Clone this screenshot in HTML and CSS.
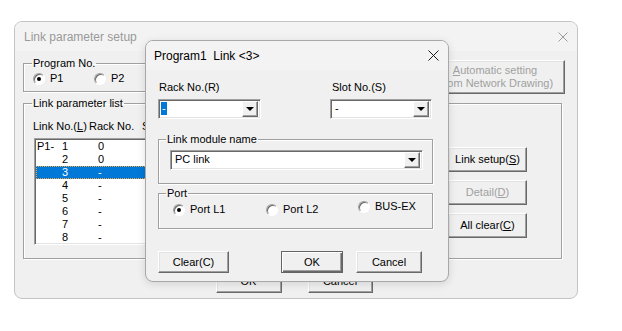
FILE: index.html
```html
<!DOCTYPE html>
<html lang="en">
  <head>
    <meta charset="UTF-8" />
    <meta name="viewport" content="width=device-width, initial-scale=1.0" />
    <title>Link parameter setup</title>
    <link rel="stylesheet" href="styles.css">
  </head>
  <body>
    <div class="desk">
      <!-- parent dialog (inactive) -->
      <div class="win win-back">
        <div class="titlebar inactive">
          <span class="title">Link parameter setup</span>
          <svg class="close" width="10" height="10" viewBox="0 0 10 10"><path d="M0.5 0.5L9.5 9.5M9.5 0.5L0.5 9.5" stroke="#9a9a9a" stroke-width="1"/></svg>
        </div>
        <div class="back-body">
          <div class="top-row">
            <fieldset class="group prog-group">
              <legend>Program No.</legend>
              <div class="radio-row">
                <label class="radio p1"><span class="dot on"></span>P1</label>
                <label class="radio"><span class="dot"></span>P2</label>
              </div>
            </fieldset>
            <button class="btn auto-btn" disabled><u>A</u>utomatic setting<br>(from Network Drawing)</button>
          </div>

          <fieldset class="group list-group">
            <legend>Link parameter list</legend>
            <div class="list-wrap">
              <div class="list-col">
                <div class="list-head">
                  <span class="h-link">Link No.(<u>L</u>)</span>
                  <span class="h-rack">Rack No.</span>
                  <span>Slot No.</span>
                </div>
                <div class="listbox">
                  <div class="row"><span class="c-pre">P1-</span><span class="c-no">1</span><span class="c-rack">0</span></div>
                  <div class="row"><span class="c-pre"></span><span class="c-no">2</span><span class="c-rack">0</span></div>
                  <div class="row sel"><span class="c-pre"></span><span class="c-no">3</span><span class="c-rack">-</span></div>
                  <div class="row"><span class="c-pre"></span><span class="c-no">4</span><span class="c-rack">-</span></div>
                  <div class="row"><span class="c-pre"></span><span class="c-no">5</span><span class="c-rack">-</span></div>
                  <div class="row"><span class="c-pre"></span><span class="c-no">6</span><span class="c-rack">-</span></div>
                  <div class="row"><span class="c-pre"></span><span class="c-no">7</span><span class="c-rack">-</span></div>
                  <div class="row"><span class="c-pre"></span><span class="c-no">8</span><span class="c-rack">-</span></div>
                </div>
              </div>
              <div class="side-btns">
                <button class="btn side">Link setup(<u>S</u>)</button>
                <button class="btn side" disabled>Detail(<u>D</u>)</button>
                <button class="btn side">All clear(<u>C</u>)</button>
              </div>
            </div>
          </fieldset>

          <div class="back-actions">
            <button class="btn ok-back">OK</button>
            <button class="btn cancel-back">Cancel</button>
          </div>
        </div>
      </div>

      <!-- child dialog (active) -->
      <div class="win win-front">
        <div class="titlebar">
          <span class="title">Program1&nbsp; Link &lt;3&gt;</span>
          <svg class="close" width="11" height="11" viewBox="0 0 11 11"><path d="M0.5 0.5L10.5 10.5M10.5 0.5L0.5 10.5" stroke="#1a1a1a" stroke-width="1"/></svg>
        </div>
        <div class="front-body">
          <div class="field-row">
            <div class="field rack">
              <div class="lbl">Rack No.(R)</div>
              <div class="combo"><span class="val"><span class="hl">-</span></span><span class="arrow"></span></div>
            </div>
            <div class="field slot">
              <div class="lbl">Slot No.(S)</div>
              <div class="combo"><span class="val">-</span><span class="arrow"></span></div>
            </div>
          </div>

          <fieldset class="group module-group">
            <legend>Link module name</legend>
            <div class="combo wide"><span class="val">PC link</span><span class="arrow"></span></div>
          </fieldset>

          <fieldset class="group port-group">
            <legend>Port</legend>
            <div class="port-row">
              <label class="radio l1"><span class="dot on"></span>Port L1</label>
              <label class="radio l2"><span class="dot"></span>Port L2</label>
              <label class="radio bus"><span class="dot"></span>BUS-EX</label>
            </div>
          </fieldset>

          <div class="front-actions">
            <button class="btn clear">Clear(C)</button>
            <button class="btn default ok">OK</button>
            <button class="btn cancel">Cancel</button>
          </div>
        </div>
      </div>
    </div>
  </body>
</html>
```

FILE: styles.css
```css
* {
  margin: 0;
  padding: 0;
  box-sizing: border-box;
}
body {
  font-family: "Liberation Sans", Arial, sans-serif;
  font-size: 11px;
  color: #000;
  background-color: #fff;
}
.desk {
  position: relative;
  width: 622px;
  height: 331px;
}
.win {
  position: absolute;
  background-color: #f0f0f0;
  border: 1px solid #c4c4c4;
  border-radius: 8px;
  overflow: hidden;
}
.win-back {
  left: 14px;
  top: 21px;
  width: 564px;
  height: 278px;
}
.win-front {
  left: 145px;
  top: 40px;
  width: 304px;
  height: 242px;
  border-color: #a8a8a8;
  box-shadow: 0 2px 8px rgba(0, 0, 0, 0.12);
}
.titlebar {
  height: 29px;
  background-color: #f3f3f3;
  display: flex;
  align-items: center;
  justify-content: space-between;
  font-size: 12px;
  padding: 0 9px 0 9px;
}
.titlebar.inactive {
  color: #999;
}
.win-front .titlebar {
  padding-left: 8px;
}

/* group boxes */
.group {
  border: 1px solid #a0a0a0;
  box-shadow: inset 1px 1px 0 #fff, 1px 1px 0 #fff;
  min-width: 0;
  padding: 0;
}
.group legend {
  margin-left: 8px;
  padding: 0 1px;
  line-height: 13px;
}

/* buttons */
.btn {
  font-family: inherit;
  font-size: 11px;
  color: #000;
  background-color: #f0f0f0;
  border: 1px solid;
  border-color: #fff #696969 #696969 #fff;
  box-shadow: inset -1px -1px 0 #a0a0a0, inset 1px 1px 0 #e3e3e3;
  line-height: 13px;
}
.btn:disabled {
  color: #a0a0a0;
}
.btn.default {
  border: 1px solid #646464;
  box-shadow: inset 1px 1px 0 #fff, inset -1px -1px 0 #696969, inset -2px -2px 0 #a0a0a0;
}

/* radio buttons */
.radio {
  display: flex;
  align-items: center;
  gap: 5px;
  line-height: 13px;
}
.dot {
  position: relative;
  width: 12px;
  height: 12px;
  border-radius: 50%;
  border: 1px solid;
  border-color: #a0a0a0 #fff #fff #a0a0a0;
  background-color: #fff;
  box-shadow: inset 1px 1px 0 #696969;
}
.dot.on::after {
  content: "";
  position: absolute;
  left: 3px;
  top: 3px;
  width: 4px;
  height: 4px;
  border-radius: 50%;
  background-color: #000;
}

/* parent dialog body */
.back-body {
  padding: 6px 12px 0 8px;
}
.top-row {
  display: flex;
  align-items: flex-start;
}
.prog-group {
  width: 300px;
}
.radio-row {
  display: flex;
  padding: 2px 0 6px 9px;
}
.radio-row .p1 {
  width: 61px;
}
.auto-btn {
  margin-left: auto;
  margin-top: 3px;
  width: 140px;
  height: 34px;
  color: #8c8c8c;
}
.list-group {
  margin-top: 3px;
  margin-right: 3px;
  height: 162px;
}
.list-wrap {
  display: flex;
  padding-left: 9px;
}
.list-col {
  width: 405px;
}
.list-head {
  display: flex;
  margin-top: 10px;
  line-height: 13px;
}
.h-link {
  width: 56px;
}
.h-rack {
  width: 53px;
}
.listbox {
  margin-top: 5px;
  margin-left: 1px;
  height: 107px;
  background-color: #fff;
  border: 1px solid;
  border-color: #a0a0a0 #fff #fff #a0a0a0;
  box-shadow: inset 1px 1px 0 #696969, inset -1px -1px 0 #e3e3e3;
  padding: 1px 2px 0 1px;
  overflow: hidden;
}
.row {
  display: flex;
  height: 13px;
  line-height: 13px;
  padding-left: 1px;
}
.row.sel {
  background-color: #0078d7;
  color: #fff;
  outline: 1px dotted #f3a33b;
  outline-offset: -1px;
}
.c-pre {
  width: 23px;
}
.c-no {
  width: 8px;
  text-align: right;
}
.c-rack {
  margin-left: 30px;
}
.side-btns {
  display: flex;
  flex-direction: column;
  gap: 8px;
  margin-top: 37px;
  margin-left: 10px;
}
.btn.side {
  width: 79px;
  height: 25px;
}
.back-actions {
  display: flex;
  justify-content: center;
  gap: 26px;
  margin-top: 11px;
}
.ok-back {
  width: 66px;
  height: 23px;
}
.cancel-back {
  width: 65px;
  height: 23px;
}

/* child dialog body */
.front-body {
  padding: 11px 15px 0 12px;
}
.field-row {
  display: flex;
  justify-content: space-between;
}
.lbl {
  line-height: 13px;
  padding-left: 1px;
  margin-bottom: 5px;
}
.field.rack .combo {
  width: 103px;
}
.field.slot {
  margin-right: 1px;
}
.field.slot .lbl {
  padding-left: 2px;
}
.field.slot .combo {
  width: 102px;
}
.combo {
  display: flex;
  align-items: center;
  height: 20px;
  background-color: #fff;
  border: 1px solid;
  border-color: #a0a0a0 #fff #fff #a0a0a0;
  box-shadow: inset 1px 1px 0 #696969, inset -1px -1px 0 #e3e3e3;
  padding: 1px 2px 2px 2px;
}
.combo .val {
  flex: 1;
  line-height: 13px;
  padding-left: 2px;
}
.combo .hl {
  display: inline-block;
  background-color: #0078d7;
  color: #fff;
  padding: 0 1px;
  margin-left: -2px;
}
.combo .arrow {
  position: relative;
  width: 16px;
  height: 16px;
  background-color: #f0f0f0;
  border: 1px solid;
  border-color: #fff #696969 #696969 #fff;
  box-shadow: inset -1px -1px 0 #a0a0a0;
}
.combo .arrow::after {
  content: "";
  position: absolute;
  left: 3px;
  top: 5px;
  border-left: 4px solid transparent;
  border-right: 4px solid transparent;
  border-top: 4px solid #000;
}
.module-group {
  margin-top: 14px;
}
.module-group legend,
.port-group legend {
  margin-left: 7px;
}
.module-group .combo {
  margin: 4px 9px 13px 11px;
}
.port-group {
  margin-top: 3px;
  height: 42px;
}
.port-row {
  display: flex;
  align-items: flex-start;
  padding-left: 14px;
}
.port-row .radio {
  margin-top: 3px;
}
.port-row .l1 {
  width: 93px;
}
.port-row .l2 {
  width: 92px;
}
.port-row .bus {
  margin-top: 0;
}
.front-actions {
  display: flex;
  margin-top: 22px;
}
.front-actions .btn {
  height: 22px;
}
.clear {
  width: 71px;
}
.ok {
  width: 62px;
  margin-left: 52px;
}
.cancel {
  width: 66px;
  margin-left: 13px;
}
```
